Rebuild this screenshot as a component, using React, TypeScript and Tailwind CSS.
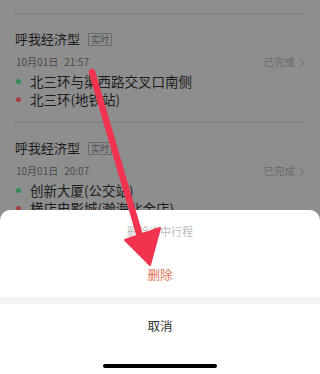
const TRIPS = [
  {
    title: '呼我经济型',
    date: '10月01日',
    time: '21:57',
    from: '北三环与渠西路交叉口南侧',
    to: '北三环(地铁站)',
  },
  {
    title: '呼我经济型',
    date: '10月01日',
    time: '20:07',
    from: '创新大厦(公交站)',
    to: '横店电影城(瀚海北金店)',
  },
];

function TripCard({ trip }: { trip: (typeof TRIPS)[number] }) {
  return (
    <div className="border-t border-[#7d7d7d] pt-[15px] pb-[14px]">
      {/* Title + badge */}
      <div className="flex items-center h-[20px] gap-[8px]">
        <span className="text-[13px] leading-[20px] text-[#1c1c1c]">{trip.title}</span>
        <span className="text-[9px] leading-[11px] px-[2px] border border-[#6a6a6a] text-[#4e4e4e] rounded-[1px]">
          实时
        </span>
      </div>

      {/* Date + status */}
      <div className="flex items-center justify-between h-[16px] mt-[5px]">
        <span className="text-[10px] leading-[16px] text-[#4a4a4a] ml-[1px]">
          {trip.date}
          <span className="ml-[6px]">{trip.time}</span>
        </span>
        <span className="flex items-center gap-[4px] text-[10.5px] leading-[16px] text-[#6a6a6a]">
          已完成
          <svg width="6" height="9" viewBox="0 0 6 9" fill="none">
            <path d="M1 1l3.5 3.5L1 8" stroke="#6a6a6a" strokeWidth="1" />
          </svg>
        </span>
      </div>

      {/* Route */}
      <div className="flex items-center h-[18px] mt-[2px]">
        <span className="w-[5px] h-[5px] rounded-full bg-[#2f8a55] ml-[1px]" />
        <span className="ml-[9px] text-[13.5px] leading-[18px] text-[#1c1c1c]">{trip.from}</span>
      </div>
      <div className="flex items-center h-[18px]">
        <span className="w-[5px] h-[5px] rounded-full bg-[#a34040] ml-[1px]" />
        <span className="ml-[9px] text-[13.5px] leading-[18px] text-[#1c1c1c]">{trip.to}</span>
      </div>
    </div>
  );
}

export default function App() {
  return (
    <div
      className="relative w-[320px] h-[374px] overflow-hidden bg-[#8e8e8e]"
      style={{ fontFamily: '"Noto Sans CJK SC", "Noto Sans", sans-serif' }}
    >
      {/* Dimmed trip list */}
      <div className="px-[15px] pt-[13px]">
        {TRIPS.map((t, i) => (
          <TripCard key={i} trip={t} />
        ))}
      </div>

      {/* Action sheet */}
      <div className="absolute left-0 right-0 bottom-0 top-[210px] bg-white rounded-t-[10px] flex flex-col">
        <div className="h-[43px] flex items-center justify-center text-[11px] text-[#bdbdbd]">
          删除选中行程
        </div>
        <div className="h-[44px] flex items-center justify-center text-[12.5px] text-[#e0704f]">
          删除
        </div>
        <div className="h-[7px] bg-[#f2f2f2]" />
        <div className="h-[44px] flex items-center justify-center text-[12.5px] text-[#333333]">
          取消
        </div>
        <div className="flex-1 flex items-end justify-center pb-[6px]">
          <div className="w-[114px] h-[4px] rounded-full bg-black" />
        </div>
      </div>

      {/* Red annotation arrow */}
      <svg
        className="absolute left-0 top-0 pointer-events-none"
        width="320"
        height="374"
        viewBox="0 0 320 374"
      >
        <line x1="92" y1="72" x2="141" y2="240" stroke="#f2334f" strokeWidth="6.5" strokeLinecap="round" />
        <polygon points="125,240 160,228 150,265" fill="#f2334f" stroke="#f2334f" strokeWidth="2" strokeLinejoin="round" />
      </svg>
    </div>
  );
}
